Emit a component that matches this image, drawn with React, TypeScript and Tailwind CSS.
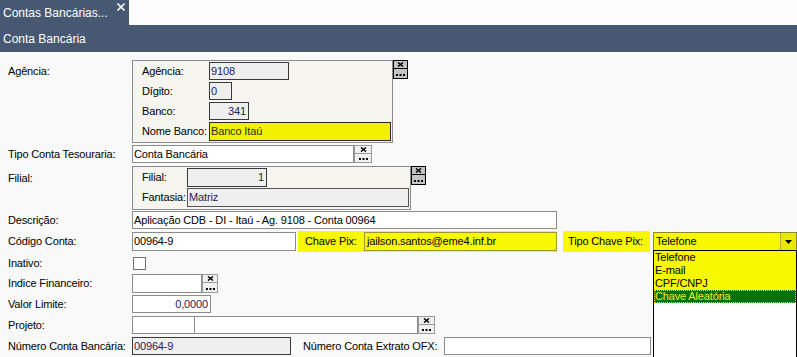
import { X } from "lucide-react";

const LookupBtn = ({ className, line }: { className: string; line: string }) => (
  <div className={`flex flex-col shrink-0 ${className}`}>
    <div className={`flex flex-1 items-center justify-center border-b ${line}`}>
      <svg width="7" height="5" viewBox="0 0 7 5">
        <path d="M1 .5 6 4.5M6 .5 1 4.5" stroke="#000" strokeWidth="1.5" />
      </svg>
    </div>
    <div className="flex flex-1 items-center justify-center pt-[2px]">
      <svg width="9" height="2" viewBox="0 0 9 2">
        <rect x="0" width="2" height="2" fill="#000" />
        <rect x="3.5" width="2" height="2" fill="#000" />
        <rect x="7" width="2" height="2" fill="#000" />
      </svg>
    </div>
  </div>
);

const DarkBtn = () => <LookupBtn className="w-[15px] h-[19px] bg-[#c4c4c4] border border-black" line="border-black" />;
const LightBtn = ({ className }: { className: string }) => (
  <LookupBtn className={`bg-[#f0f0f0] border border-[#9a9a9a] ${className}`} line="border-[#9a9a9a]" />
);

const Label = ({ children, className = "" }: { children: React.ReactNode; className?: string }) => (
  <div className={`w-[132px] shrink-0 pl-2 whitespace-nowrap ${className}`}>{children}</div>
);

export default function App() {
  return (
    <div className="w-[797px] h-[357px] overflow-hidden bg-[#f9f9f9] text-[11px] leading-none text-black font-['Liberation_Sans',Arial,sans-serif] tracking-[-0.15px]">
      {/* tab bar */}
      <div className="flex h-[25px] bg-[#fcfcfc]">
        <div className="relative flex w-[129px] bg-[#475872] text-white text-[12px] tracking-normal">
          <span className="pl-[3px] pt-[7px]">Contas Bancárias...</span>
          <X className="absolute right-[2px] top-[1px]" size={12} strokeWidth={3.5} color="#fff" />
        </div>
      </div>
      <div className="flex h-[27px] items-center bg-[#475872] pl-[3px] text-white text-[12px] tracking-normal">
        Conta Bancária
      </div>

      <div className="relative pt-2">
        {/* Agência */}
        <div className="flex h-[83px]">
          <Label className="pt-[6px]">Agência:</Label>
          <div className="flex w-[261px] flex-col gap-[2px] border border-[#8c8c8c] bg-[#f6f5f0] pt-[1px] pl-[9px]">
            <div className="flex h-[18px] items-center">
              <span className="w-[67px]">Agência:</span>
              <div className="flex h-full w-[80px] items-center border border-[#3a3a3a] bg-[#efefef] pl-[1px] text-[#23235a]">9108</div>
            </div>
            <div className="flex h-[18px] items-center">
              <span className="w-[67px]">Dígito:</span>
              <div className="flex h-full w-[23px] items-center border border-[#3a3a3a] bg-[#efefef] pl-[1px] text-[#23235a]">0</div>
            </div>
            <div className="flex h-[18px] items-center">
              <span className="w-[67px]">Banco:</span>
              <div className="flex h-full w-[40px] items-center justify-end border border-[#3a3a3a] bg-[#efefef] pr-[2px] text-[#23235a]">341</div>
            </div>
            <div className="flex h-[19px] items-center">
              <span className="w-[67px]">Nome Banco:</span>
              <div className="flex h-full w-[182px] items-center border border-[#2a2a2a] bg-[#f2f200] pl-[1px] text-[#2a2a20]">Banco Itaú</div>
            </div>
          </div>
          <DarkBtn />
        </div>

        {/* Tipo Conta Tesouraria */}
        <div className="mt-[2px] flex h-[18px] items-center">
          <Label>Tipo Conta Tesouraria:</Label>
          <div className="flex h-full w-[222px] items-center border border-[#8c8c8c] bg-white pl-[1px]">Conta Bancária</div>
          <LightBtn className="w-[18px] h-[18px]" />
        </div>

        {/* Filial */}
        <div className="mt-[3px] flex h-[44px]">
          <Label className="pt-[7px]">Filial:</Label>
          <div className="flex w-[279px] flex-col gap-[1px] border border-[#8c8c8c] bg-[#f6f5f0] pt-[1px] pl-[9px]">
            <div className="flex h-[19px] items-center">
              <span className="w-[45px]">Filial:</span>
              <div className="flex h-full w-[80px] items-center justify-end border border-[#3a3a3a] bg-[#efefef] pr-[2px] text-[#23235a]">1</div>
            </div>
            <div className="flex h-[19px] items-center">
              <span className="w-[45px]">Fantasia:</span>
              <div className="flex h-full w-[222px] items-center border border-[#555] bg-[#efefef] pl-[1px] text-[#23235a]">Matriz</div>
            </div>
          </div>
          <DarkBtn />
        </div>

        {/* Descrição */}
        <div className="mt-[1px] flex h-[18px] items-center">
          <Label>Descrição:</Label>
          <div className="flex h-full w-[425px] items-center border border-[#8c8c8c] bg-white pl-[1px]">
            Aplicação CDB - DI - Itaú - Ag. 9108 - Conta 00964
          </div>
        </div>

        {/* Código Conta / Chave Pix / Tipo Chave Pix */}
        <div className="mt-[2px] flex h-[21px] items-center">
          <Label>Código Conta:</Label>
          <div className="flex h-[19px] w-[164px] items-center border border-[#8c8c8c] bg-white pl-[1px]">00964-9</div>
          <div className="ml-[2px] flex h-full w-[259px] items-center bg-[#f8f800] pl-[7px]">
            <span className="w-[59px]">Chave Pix:</span>
            <div className="flex h-[19px] w-[193px] items-center border border-[#9a9a2a] pl-[2px]">jailson.santos@eme4.inf.br</div>
          </div>
          <div className="ml-[6px] flex h-full w-[87px] items-center bg-[#f8f800] pl-[5px]">Tipo Chave Pix:</div>
          <div className="ml-[3px] flex h-[19px] w-[144px] items-center border border-[#8a8a20] bg-[#f8f800]">
            <span className="flex-1 pl-[2px]">Telefone</span>
            <div className="flex h-full w-[16px] items-center justify-center border-l border-[#b0b030] bg-[#e8e800]">
              <svg width="7" height="4" viewBox="0 0 7 4">
                <path d="M0 0h7L3.5 4z" fill="#000" />
              </svg>
            </div>
          </div>
        </div>

        {/* Inativo */}
        <div className="mt-[1px] flex h-[20px] items-center">
          <Label>Inativo:</Label>
          <div className="ml-[1px] h-[13px] w-[13px] border border-[#707070] bg-white" />
        </div>

        {/* Indice Financeiro */}
        <div className="mt-[1px] flex h-[19px] items-center">
          <Label>Indice Financeiro:</Label>
          <div className="h-full w-[70px] border border-[#8c8c8c] bg-white" />
          <LightBtn className="w-[16px] h-[19px]" />
        </div>

        {/* Valor Limite */}
        <div className="mt-[2px] flex h-[18px] items-center">
          <Label>Valor Limite:</Label>
          <div className="flex h-full w-[79px] items-center justify-end border border-[#8c8c8c] bg-white pr-[2px] text-[#23235a]">0,0000</div>
        </div>

        {/* Projeto */}
        <div className="mt-[3px] flex h-[18px] items-center">
          <Label>Projeto:</Label>
          <div className="h-full w-[63px] border border-[#8c8c8c] bg-white" />
          <div className="h-full w-[223px] border border-l-0 border-[#8c8c8c] bg-white" />
          <LightBtn className="w-[17px] h-[18px]" />
        </div>

        {/* Número Conta Bancária */}
        <div className="mt-[3px] flex h-[18px] items-center">
          <Label>Número Conta Bancária:</Label>
          <div className="flex h-full w-[159px] items-center border border-[#3a3a3a] bg-[#efefef] pl-[1px] text-[#23235a]">00964-9</div>
          <span className="ml-[12px] w-[141px] whitespace-nowrap">Número Conta Extrato OFX:</span>
          <div className="h-full w-[207px] border border-[#8c8c8c] bg-white" />
        </div>

        {/* open dropdown list */}
        <div className="absolute left-[653px] top-[198px] flex h-[108px] w-[144px] flex-col border border-black bg-white">
          <div className="flex h-[13px] items-center bg-[#f8f800] pl-[1px]">Telefone</div>
          <div className="flex h-[13px] items-center bg-[#f8f800] pl-[1px]">E-mail</div>
          <div className="flex h-[13px] items-center bg-[#f8f800] pl-[1px]">CPF/CNPJ</div>
          <div className="flex h-[13px] items-center border border-dotted border-[#e0e000] bg-[#087008] text-[#e8f020]">Chave Aleatória</div>
        </div>
      </div>
    </div>
  );
}
